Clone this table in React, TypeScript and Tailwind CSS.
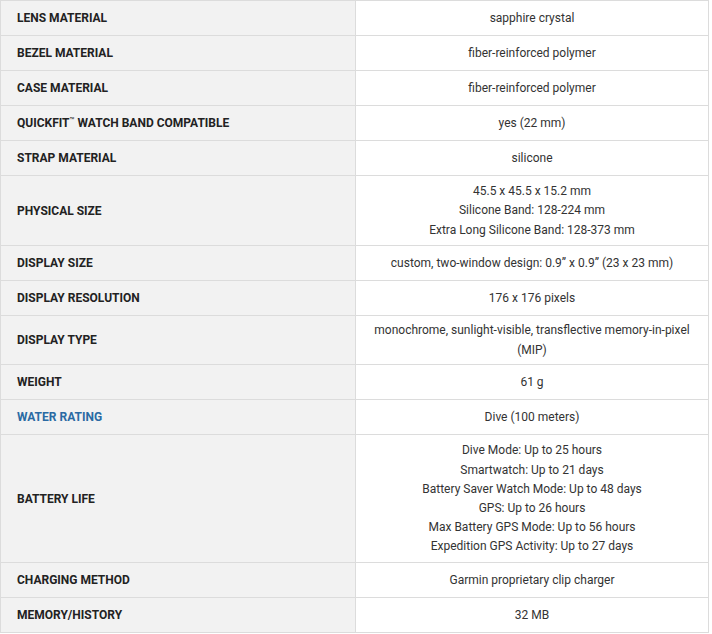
import React from "react";

type Spec = {
  label: React.ReactNode;
  value: string[];
  h: string;
  link?: boolean;
};

const specs: Spec[] = [
  { label: "LENS MATERIAL", value: ["sapphire crystal"], h: "h-[35px]" },
  { label: "BEZEL MATERIAL", value: ["fiber-reinforced polymer"], h: "h-[35px]" },
  { label: "CASE MATERIAL", value: ["fiber-reinforced polymer"], h: "h-[35px]" },
  {
    label: (
      <>
        QUICKFIT<span className="text-[8px] font-normal align-[4px] leading-none">™</span> WATCH BAND COMPATIBLE
      </>
    ),
    value: ["yes (22 mm)"],
    h: "h-[35px]",
  },
  { label: "STRAP MATERIAL", value: ["silicone"], h: "h-[35px]" },
  {
    label: "PHYSICAL SIZE",
    value: ["45.5 x 45.5 x 15.2 mm", "Silicone Band: 128-224 mm", "Extra Long Silicone Band: 128-373 mm"],
    h: "h-[70px]",
  },
  { label: "DISPLAY SIZE", value: ["custom, two-window design: 0.9\u201d x 0.9\u201d (23 x 23 mm)"], h: "h-[35px]" },
  { label: "DISPLAY RESOLUTION", value: ["176 x 176 pixels"], h: "h-[35px]" },
  {
    label: "DISPLAY TYPE",
    value: ["monochrome, sunlight-visible, transflective memory-in-pixel", "(MIP)"],
    h: "h-[49px]",
  },
  { label: "WEIGHT", value: ["61 g"], h: "h-[35px]" },
  { label: "WATER RATING", value: ["Dive (100 meters)"], h: "h-[35px]", link: true },
  {
    label: "BATTERY LIFE",
    value: [
      "Dive Mode: Up to 25 hours",
      "Smartwatch: Up to 21 days",
      "Battery Saver Watch Mode: Up to 48 days",
      "GPS: Up to 26 hours",
      "Max Battery GPS Mode: Up to 56 hours",
      "Expedition GPS Activity: Up to 27 days",
    ],
    h: "h-[128px]",
  },
  { label: "CHARGING METHOD", value: ["Garmin proprietary clip charger"], h: "h-[35px]" },
  { label: "MEMORY/HISTORY", value: ["32 MB"], h: "h-[35px]" },
];

export default function App() {
  return (
    <div className="bg-white w-[712px] h-[634px] font-['Roboto',sans-serif] text-[12px]">
      <div className="w-[709px] border-t border-l border-r border-[#dcdcdc]">
        {specs.map((s, i) => (
          <div key={i} className={`flex border-b border-[#dcdcdc] ${s.h}`}>
            <div
              className={`w-[355px] shrink-0 bg-[#f2f2f2] border-r border-[#dcdcdc] flex items-center pl-4 font-bold ${
                s.link ? "text-[#2a6aa3]" : "text-[#222]"
              }`}
            >
              <span>{s.label}</span>
            </div>
            <div className="flex-1 flex flex-col justify-center items-center text-center text-[#333] leading-[19.2px] px-2 pt-[1px]">
              {s.value.map((v, j) => (
                <div key={j}>{v}</div>
              ))}
            </div>
          </div>
        ))}
      </div>
    </div>
  );
}
